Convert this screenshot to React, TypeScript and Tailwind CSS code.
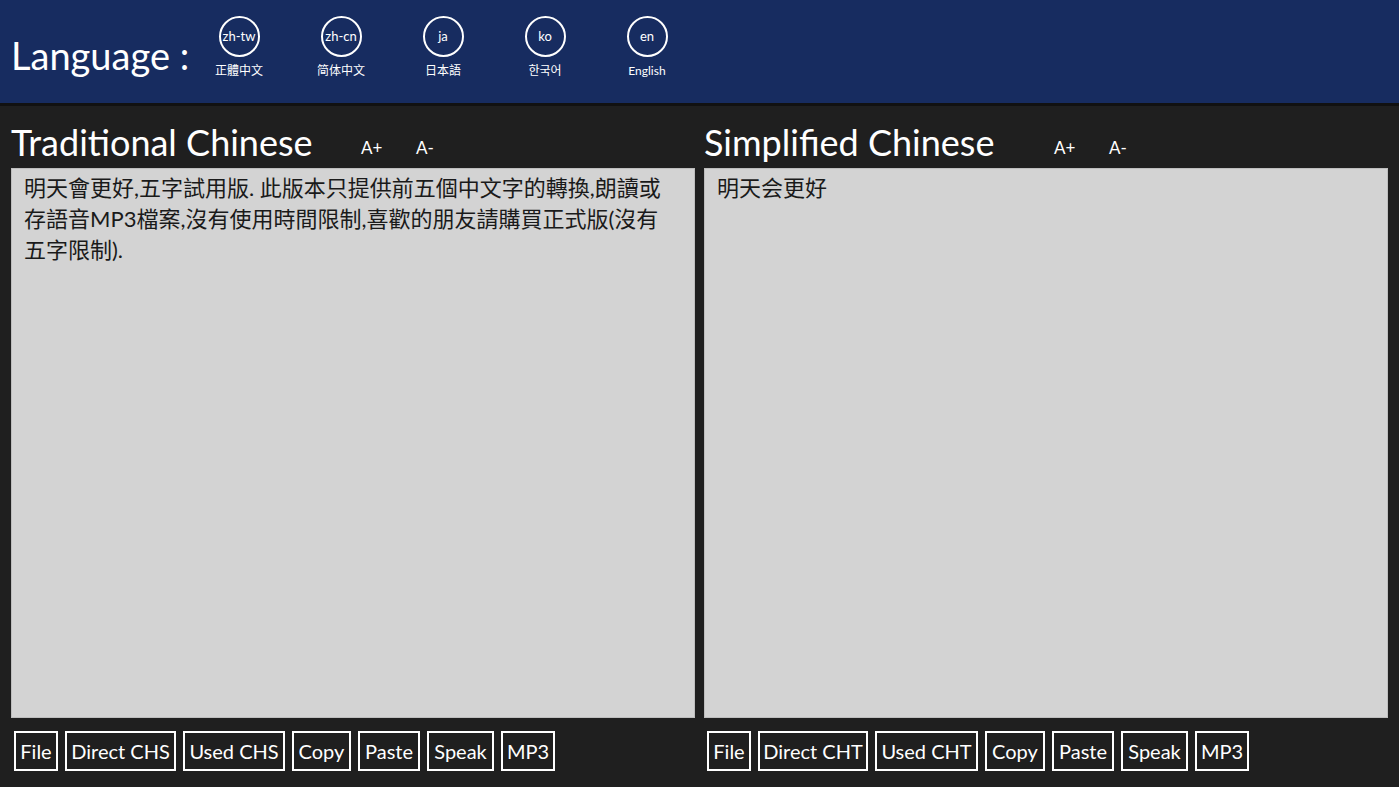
import React from "react";

const FONT = { fontFamily: 'Lato, "Noto Sans CJK TC", "Noto Sans CJK KR", sans-serif' };

const langs = [
  { code: "zh-tw", label: "正體中文" },
  { code: "zh-cn", label: "简体中文" },
  { code: "ja", label: "日本語" },
  { code: "ko", label: "한국어" },
  { code: "en", label: "English" },
];

function LangButton({ code, label }: { code: string; label: string }) {
  return (
    <div className="flex w-[102px] flex-col items-center">
      <div className="flex h-[41px] w-[41px] items-center justify-center rounded-full border-2 border-white text-[13px] leading-none text-white">
        {code}
      </div>
      <div className="mt-[8px] text-[12px] leading-none text-white">{label}</div>
    </div>
  );
}

function Panel({
  title,
  lines,
  buttons,
}: {
  title: string;
  lines: string[];
  buttons: { label: string; w: string }[];
}) {
  return (
    <div className="flex w-[684px] flex-col">
      <div className="flex h-[62px] items-end pb-[8px]">
        <h1 className="w-[350px] text-[36px] leading-none font-normal whitespace-nowrap text-white">
          {title}
        </h1>
        <span className="mb-[4px] w-[55px] text-[17px] leading-none text-white">A+</span>
        <span className="mb-[4px] text-[17px] leading-none text-white">A-</span>
      </div>
      <div className="h-[550px] border border-[#bdbdbd] bg-[#d3d3d3] px-[12px] pt-[3px] text-[22px] leading-[31px] text-[#1a1a1a]">
        {lines.map((l, i) => (
          <div key={i} className="whitespace-nowrap">
            {l}
          </div>
        ))}
      </div>
      <div className="mt-[13px] flex gap-[7px] pl-[3px]">
        {buttons.map((b) => (
          <button
            key={b.label}
            className={`${b.w} h-[40px] border-2 border-white text-center text-[20px] leading-none whitespace-nowrap text-white`}
          >
            {b.label}
          </button>
        ))}
      </div>
    </div>
  );
}

export default function App() {
  return (
    <div className="flex h-[787px] w-[1399px] flex-col overflow-hidden bg-[#1f1f1f]" style={FONT}>
      <header className="flex h-[106px] items-start border-b-[3px] border-[#111111] bg-[#172c60] pl-[11px]">
        <div className="mt-[36px] w-[177px] text-[38px] leading-none whitespace-nowrap text-white">
          Language :
        </div>
        <div className="mt-[16px] flex">
          {langs.map((l) => (
            <LangButton key={l.code} {...l} />
          ))}
        </div>
      </header>
      <main className="flex gap-[9px] px-[11px]">
        <Panel
          title="Traditional Chinese"
          lines={[
            "明天會更好,五字試用版. 此版本只提供前五個中文字的轉換,朗讀或",
            "存語音MP3檔案,沒有使用時間限制,喜歡的朋友請購買正式版(沒有",
            "五字限制).",
          ]}
          buttons={[
            { label: "File", w: "w-[44px]" },
            { label: "Direct CHS", w: "w-[111px]" },
            { label: "Used CHS", w: "w-[102px]" },
            { label: "Copy", w: "w-[59px]" },
            { label: "Paste", w: "w-[62px]" },
            { label: "Speak", w: "w-[67px]" },
            { label: "MP3", w: "w-[54px]" },
          ]}
        />
        <Panel
          title="Simplified Chinese"
          lines={["明天会更好"]}
          buttons={[
            { label: "File", w: "w-[44px]" },
            { label: "Direct CHT", w: "w-[110px]" },
            { label: "Used CHT", w: "w-[103px]" },
            { label: "Copy", w: "w-[60px]" },
            { label: "Paste", w: "w-[62px]" },
            { label: "Speak", w: "w-[67px]" },
            { label: "MP3", w: "w-[54px]" },
          ]}
        />
      </main>
    </div>
  );
}
